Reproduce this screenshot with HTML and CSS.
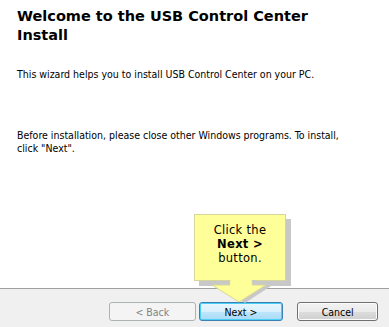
FILE: index.html
```html
<!DOCTYPE html>
<html lang="en">
<head>
  <meta charset="UTF-8" />
  <title>USB Control Center Setup</title>
  <link rel="stylesheet" href="styles.css">
</head>
<body>
<div class="wizard">
  <main class="content">
    <h1 class="title">Welcome to the USB Control Center Install</h1>
    <p class="intro">This wizard helps you to install USB Control Center on your PC.</p>
    <p class="note">Before installation, please close other Windows programs. To install, click "Next".</p>
  </main>
  <footer class="buttons">
    <button class="btn btn-back" disabled>&lt; Back</button>
    <button class="btn btn-next">Next &gt;</button>
    <button class="btn btn-cancel">Cancel</button>
  </footer>

  <div class="callout" aria-hidden="true">
    <div class="callout-box">Click the<br><strong>Next &gt;</strong><br>button.</div>
    <svg class="callout-arrow" width="64" height="24" viewBox="0 0 64 24">
      <polygon points="22,0 44,0 44,6 60,6 34,23 5,6 22,6" fill="#c8c8c8" transform="translate(3,0)" />
      <polygon points="22,0 44,0 44,5 58,5 31,22 4,5 22,5" fill="#ffff99" stroke="#d6d69a" stroke-width="1" />
      <rect x="22.5" y="0" width="21" height="5" fill="#ffff99" />
    </svg>
  </div>
</div>
</body>
</html>
```

FILE: styles.css
```css
html, body {
  margin: 0;
  padding: 0;
  background: #ffffff;
}
.wizard {
  position: relative;
  width: 389px;
  height: 327px;
  overflow: hidden;
  font-family: "DejaVu Sans Condensed", "Liberation Sans", sans-serif;
  color: #000000;
}
.content {
  height: 288px;
  padding: 7px 17px 0 17px;
  box-sizing: border-box;
  background: #ffffff;
}
.title {
  margin: 0;
  font-family: "DejaVu Sans", sans-serif;
  font-weight: bold;
  font-size: 14.5px;
  line-height: 19px;
  width: 300px;
  color: #000000;
}
.intro {
  margin: 23px 0 0 0;
  font-size: 10.5px;
  line-height: 13px;
}
.note {
  margin: 48px 0 0 0;
  font-size: 10.5px;
  line-height: 13px;
  width: 340px;
}
.buttons {
  height: 39px;
  box-sizing: border-box;
  border-top: 1px solid #a0a0a0;
  background: #f0f0f0;
  display: flex;
  align-items: flex-start;
  padding: 13px 11px 0 109px;
}
.btn {
  height: 19px;
  padding: 0;
  font-family: "DejaVu Sans Condensed", "Liberation Sans", sans-serif;
  font-size: 10.5px;
  color: #000000;
  border: 1px solid #707070;
  border-radius: 3px;
  background: linear-gradient(#f2f2f2 0%, #ebebeb 50%, #dddddd 51%, #cfcfcf 100%);
  box-shadow: inset 0 0 0 1px #fcfcfc;
}
.btn-back {
  width: 87px;
  color: #838383;
  border-color: #adb2b5;
  background: #f4f4f4;
  box-shadow: none;
}
.btn-next {
  width: 85px;
  margin-left: 3px;
  border-color: #3c7fb1;
  background: linear-gradient(#eaf6fd 0%, #d9f0fc 50%, #bee6fd 51%, #a7d9f5 100%);
  box-shadow: inset 0 0 0 1px #48d0f8;
}
.btn-cancel {
  width: 81px;
  margin-left: 14px;
}
.callout {
  position: absolute;
  left: 194px;
  top: 214px;
  width: 100px;
}
.callout-box {
  width: 92px;
  height: 67px;
  box-sizing: border-box;
  padding-top: 8px;
  background: #ffff99;
  border: 1px solid #d6d69a;
  box-shadow: 5px 5px 0 #c8c8c8;
  text-align: center;
  font-family: "DejaVu Sans", sans-serif;
  font-size: 11.5px;
  line-height: 14px;
  letter-spacing: 0.3px;
}
.callout-box strong {
  font-weight: bold;
}
.callout-arrow {
  display: block;
  margin: -1px 0 0 14px;
}
```
